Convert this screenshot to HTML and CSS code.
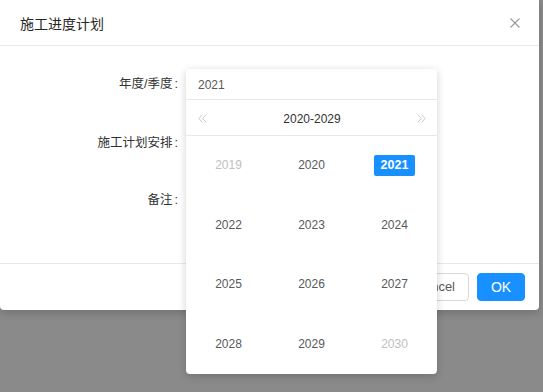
FILE: index.html
```html
<!DOCTYPE html>
<html>
<head>
<meta charset="utf-8">
<link rel="stylesheet" href="styles.css">
</head>
<body>
<div class="modal">
  <div class="modal-header">
    <span class="modal-title">施工进度计划</span>
    <svg class="close" width="10" height="10" viewBox="0 0 10 10"><path d="M0.5 0.5 L9.5 9.5 M9.5 0.5 L0.5 9.5" stroke="#999" stroke-width="1.1" fill="none"/></svg>
  </div>
  <div class="modal-body">
    <div class="form-item item-year"><label class="form-label">年度/季度<span class="colon">:</span></label></div>
    <div class="form-item item-plan"><label class="form-label">施工计划安排<span class="colon">:</span></label></div>
    <div class="form-item item-note"><label class="form-label">备注<span class="colon">:</span></label></div>
  </div>
  <div class="modal-footer">
    <button class="btn btn-default">Cancel</button>
    <button class="btn btn-primary">OK</button>
  </div>
</div>

<div class="picker">
  <div class="picker-input">2021</div>
  <div class="picker-header">
    <svg class="arrow" width="9" height="9" viewBox="0 0 9 9"><path d="M4.5 0.5 L0.8 4.5 L4.5 8.5 M8.3 0.5 L4.6 4.5 L8.3 8.5" stroke="#c4c4c4" stroke-width="0.9" fill="none"/></svg>
    <span class="decade">2020-2029</span>
    <svg class="arrow" width="9" height="9" viewBox="0 0 9 9"><path d="M0.7 0.5 L4.4 4.5 L0.7 8.5 M4.5 0.5 L8.2 4.5 L4.5 8.5" stroke="#c4c4c4" stroke-width="0.9" fill="none"/></svg>
  </div>
  <div class="picker-body">
    <div class="cell"><span class="year muted">2019</span></div>
    <div class="cell"><span class="year">2020</span></div>
    <div class="cell"><span class="year selected">2021</span></div>
    <div class="cell"><span class="year">2022</span></div>
    <div class="cell"><span class="year">2023</span></div>
    <div class="cell"><span class="year">2024</span></div>
    <div class="cell"><span class="year">2025</span></div>
    <div class="cell"><span class="year">2026</span></div>
    <div class="cell"><span class="year">2027</span></div>
    <div class="cell"><span class="year">2028</span></div>
    <div class="cell"><span class="year">2029</span></div>
    <div class="cell"><span class="year muted">2030</span></div>
  </div>
</div>
</body>
</html>
```

FILE: styles.css
```css
html, body {
  margin: 0;
  padding: 0;
}
body {
  width: 543px;
  height: 392px;
  background: #8a8a8a;
  font-family: "Liberation Sans", Arial, "Noto Sans CJK SC", sans-serif;
  position: relative;
  overflow: hidden;
}
.modal {
  width: 539px;
  height: 310px;
  background: #fff;
  border-radius: 0 0 4px 4px;
  box-shadow: 0 3px 8px rgba(0,0,0,0.18);
  display: flex;
  flex-direction: column;
}
.modal-header {
  height: 46px;
  box-sizing: border-box;
  border-bottom: 1px solid #e8e8e8;
  display: flex;
  align-items: center;
  justify-content: space-between;
  padding: 0 20px 0 20px;
}
.modal-title {
  font-size: 14px;
  color: #262626;
  font-family: "Noto Sans CJK SC", sans-serif;
  line-height: 20px;
}
.close {
  display: block;
  margin-right: -1px;
}
.modal-body {
  flex: 1;
  padding-top: 24px;
  box-sizing: border-box;
}
.form-item {
  display: flex;
  height: 28px;
  align-items: center;
}
.item-year { margin-bottom: 31px; }
.item-plan { margin-bottom: 29px; }
.form-label {
  width: 186px;
  box-sizing: border-box;
  padding-right: 8px;
  text-align: right;
  font-size: 12.5px;
  color: #333;
  font-family: "Liberation Sans", Arial, "Noto Sans CJK SC", sans-serif;
  line-height: 16px;
}
.colon {
  margin-left: 2px;
}
.modal-footer {
  height: 47px;
  box-sizing: border-box;
  border-top: 1px solid #e8e8e8;
  display: flex;
  justify-content: flex-end;
  align-items: flex-start;
  padding: 9px 14px 0 0;
  gap: 8px;
}
.btn {
  height: 28px;
  font-family: "Liberation Sans", Arial, sans-serif;
  font-size: 13px;
  border-radius: 4px;
  padding: 0 13px;
  line-height: 26px;
  margin: 0;
}
.btn-default {
  background: #fff;
  border: 1px solid #d9d9d9;
  color: #595959;
}
.btn-primary {
  background: #1890ff;
  border: 1px solid #1890ff;
  color: #fff;
  width: 48px;
  padding: 0;
  font-size: 14px;
}

.picker {
  position: absolute;
  left: 186px;
  top: 69px;
  width: 251px;
  height: 305px;
  background: #fff;
  border-radius: 4px;
  box-shadow: 0 2px 8px rgba(0,0,0,0.18);
  display: flex;
  flex-direction: column;
}
.picker-input {
  height: 31px;
  box-sizing: border-box;
  border-bottom: 1px solid #e8e8e8;
  padding-left: 12px;
  padding-top: 2px;
  font-size: 12px;
  color: #595959;
  display: flex;
  align-items: center;
}
.picker-header {
  height: 36px;
  box-sizing: border-box;
  border-bottom: 1px solid #e8e8e8;
  display: flex;
  align-items: center;
  justify-content: space-between;
  padding: 2px 11px 0 12px;
}
.arrow { display: block; }
.decade {
  font-size: 12px;
  color: #333;
}
.picker-body {
  flex: 1;
  display: grid;
  grid-template-columns: repeat(3, 1fr);
  grid-template-rows: repeat(4, 1fr);
  padding: 0 1px;
}
.cell {
  display: flex;
  align-items: center;
  justify-content: center;
}
.year {
  font-size: 12px;
  color: #595959;
  height: 21px;
  line-height: 21px;
  padding: 0 7px;
  border-radius: 2px;
  margin-top: 0px;
}
.year.muted { color: #c0c0c0; }
.year.selected {
  background: #1890ff;
  color: #fff;
  font-weight: bold;
  font-size: 12.5px;
}
```
